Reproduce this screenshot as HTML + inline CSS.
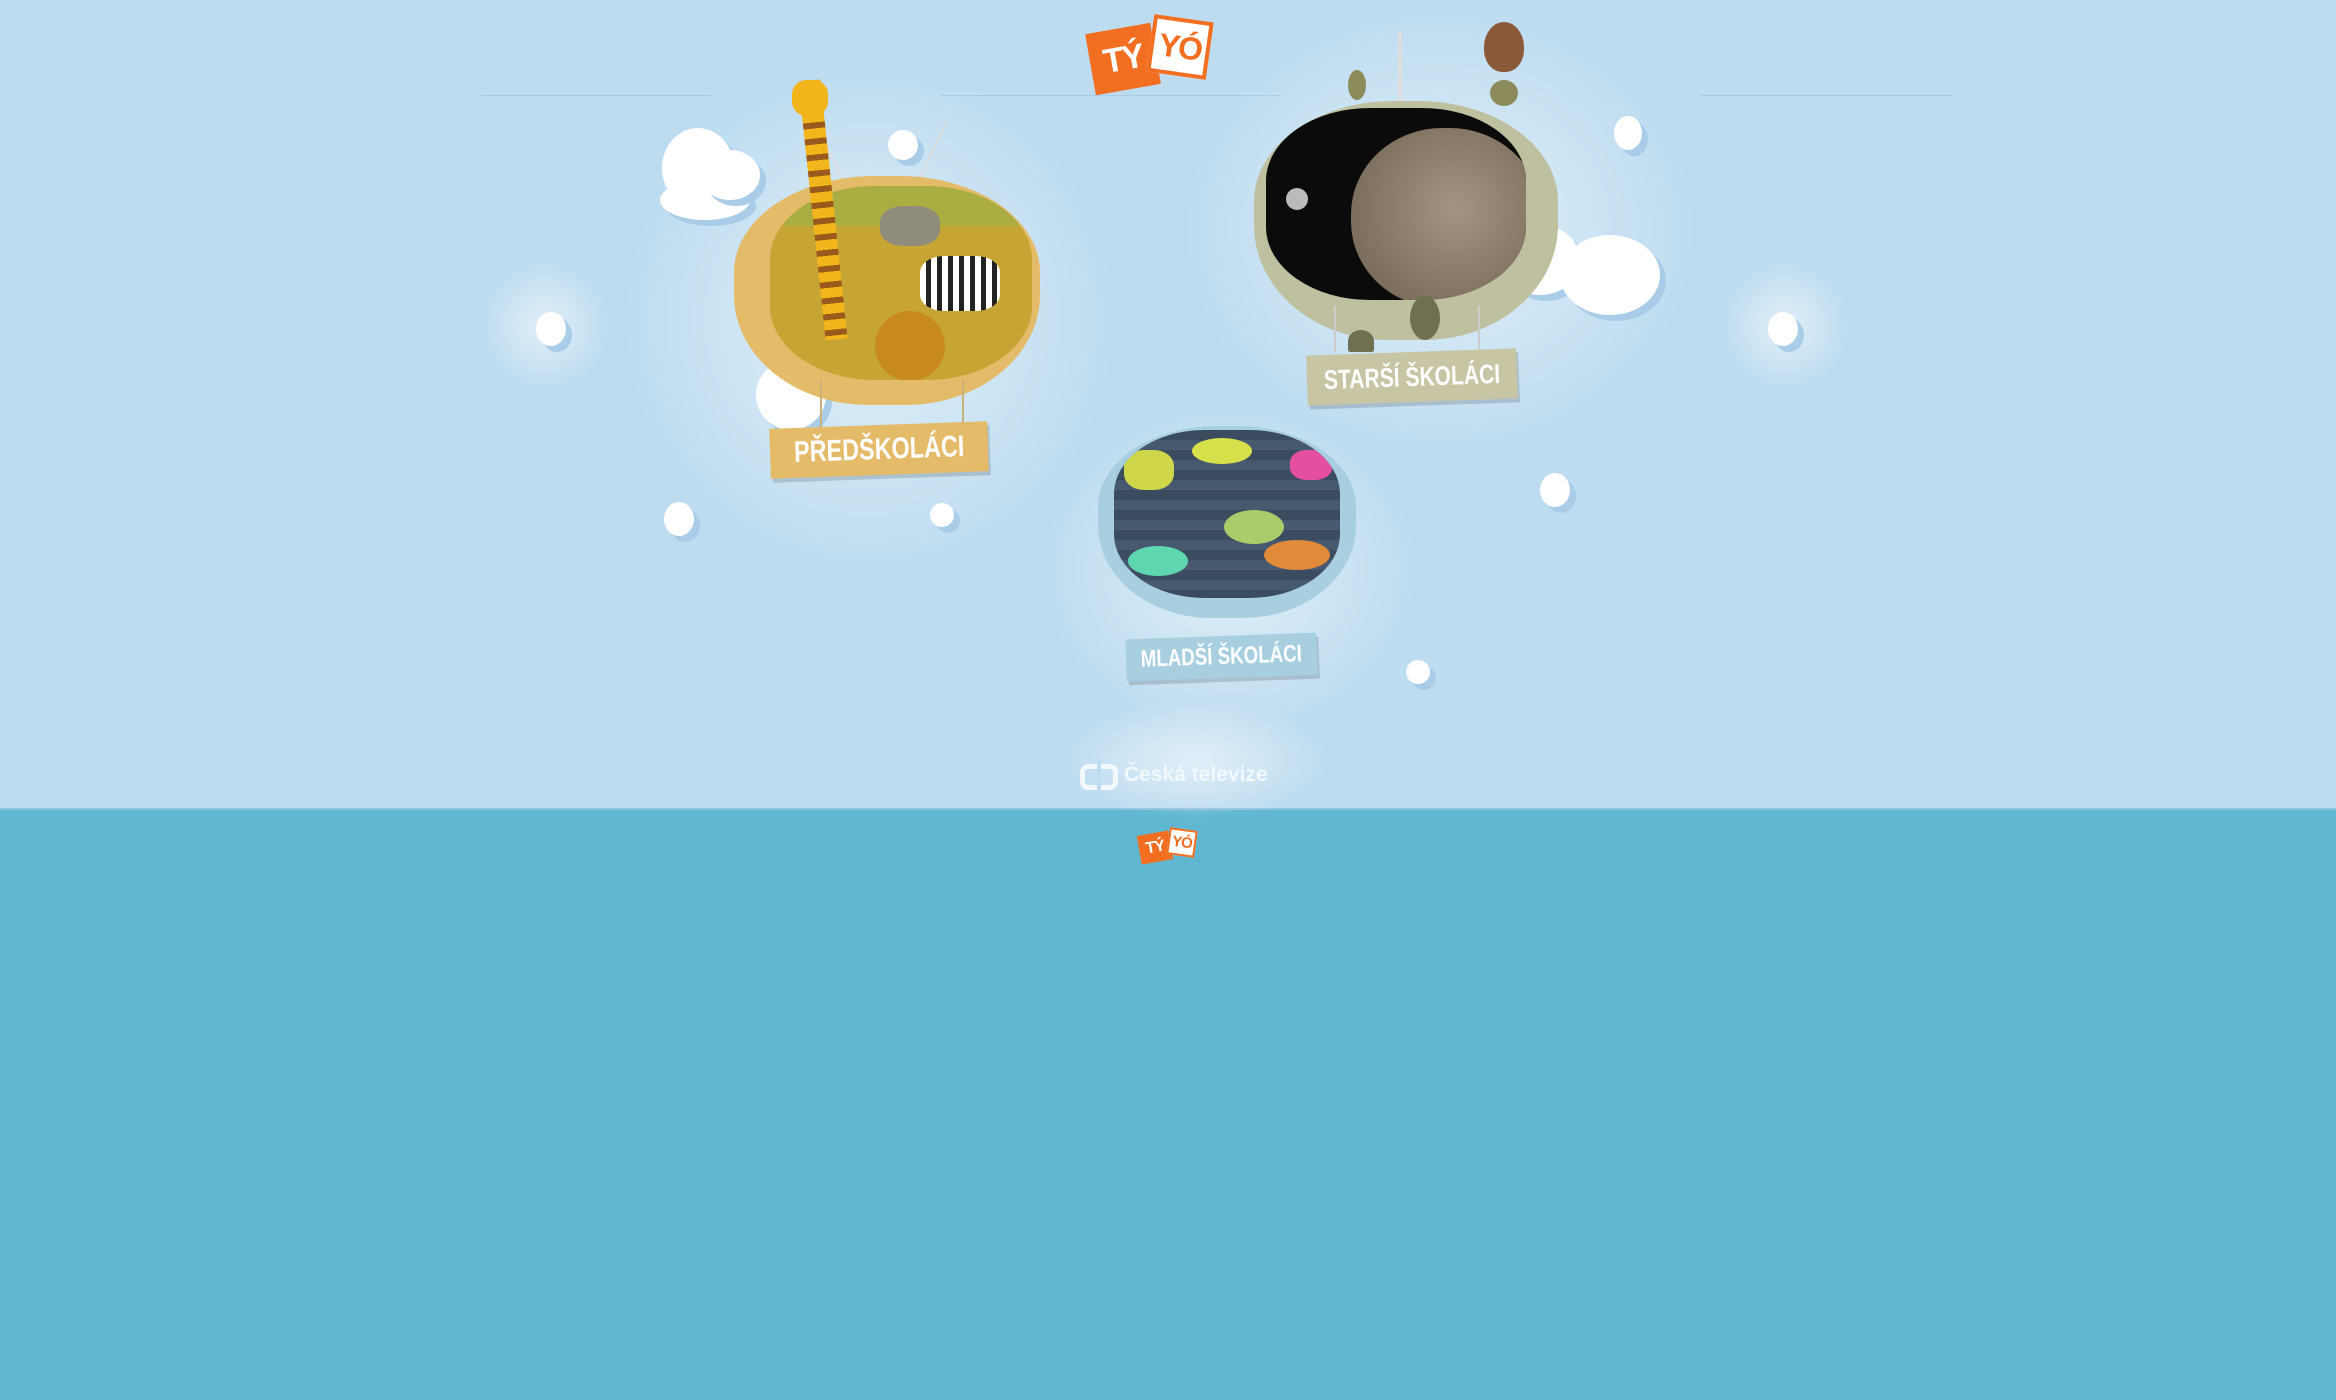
<!DOCTYPE html>
<html><head><meta charset="utf-8"><style>
html,body{margin:0;padding:0}
body{width:2336px;height:1400px;position:relative;overflow:hidden;background:#5fb7d1;font-family:"Liberation Sans",sans-serif}
#top{position:absolute;left:0;top:0;width:2336px;height:808px;background:#bddcf0;border-bottom:2px solid #8fc3dc}
.hl{position:absolute;top:95px;height:1px;background:#a8cde6}
.glow{position:absolute;border-radius:50%;background:radial-gradient(closest-side,rgba(255,255,255,.55),rgba(255,255,255,0))}
.cl{position:absolute;background:#fff;border-radius:50%;box-shadow:6px 6px 0 #a9cde8}
.logo{position:absolute}
.logo .a{position:absolute;background:#f26f21;color:#fff;font-weight:bold;transform:rotate(-10deg);display:flex;align-items:center;justify-content:center;letter-spacing:-2px;overflow:hidden}
.logo .b{position:absolute;background:#fff;border:solid #f26f21;color:#f26f21;font-weight:bold;transform:rotate(8deg);display:flex;align-items:center;justify-content:center;letter-spacing:-2px;overflow:hidden;box-sizing:border-box}
.tv{position:absolute;border-radius:46% 46% 44% 44%/42% 42% 48% 48%}
.scr{position:absolute;border-radius:40%/38%;overflow:hidden}
.lab{position:absolute;color:#fff;font-weight:bold;display:flex;justify-content:center;align-items:center;transform:rotate(-2deg);white-space:nowrap;overflow:hidden;box-shadow:2px 4px 0 rgba(0,0,0,.15)}
.lab span{display:inline-block;flex:none;transform:scaleX(.78)}
.str{position:absolute;width:2px;background:#c9b27a}
</style></head><body>
<div id="top">
<div class="hl" style="left:481px;width:230px"></div>
<div class="hl" style="left:940px;width:340px"></div>
<div class="hl" style="left:1700px;width:253px"></div>
<div class="glow" style="left:620px;top:60px;width:500px;height:520px"></div>
<div class="glow" style="left:1180px;top:0;width:520px;height:460px"></div>
<div class="glow" style="left:1040px;top:400px;width:380px;height:340px"></div>
<div class="glow" style="left:480px;top:260px;width:130px;height:130px"></div>
<div class="glow" style="left:1720px;top:260px;width:130px;height:130px"></div>
<div class="glow" style="left:1060px;top:700px;width:270px;height:120px"></div>

<div class="cl" style="left:662px;top:128px;width:72px;height:80px"></div>
<div class="cl" style="left:660px;top:180px;width:90px;height:40px"></div>
<div class="cl" style="left:700px;top:150px;width:60px;height:50px"></div>
<div class="cl" style="left:756px;top:360px;width:70px;height:70px"></div>
<div class="cl" style="left:888px;top:130px;width:30px;height:30px"></div>
<div class="cl" style="left:536px;top:312px;width:30px;height:34px"></div>
<div class="cl" style="left:664px;top:502px;width:30px;height:34px"></div>
<div class="cl" style="left:930px;top:503px;width:24px;height:24px"></div>
<div class="cl" style="left:1500px;top:225px;width:80px;height:70px"></div>
<div class="cl" style="left:1560px;top:235px;width:100px;height:80px"></div>
<div class="cl" style="left:1614px;top:116px;width:28px;height:34px"></div>
<div class="cl" style="left:1768px;top:312px;width:30px;height:34px"></div>
<div class="cl" style="left:1540px;top:473px;width:30px;height:34px"></div>
<div class="cl" style="left:1406px;top:660px;width:24px;height:24px"></div>

<div class="logo" style="left:1086px;top:12px;width:140px;height:80px">
 <div class="a" style="left:4px;top:16px;width:66px;height:62px;font-size:34px">TÝ</div>
 <div class="b" style="left:64px;top:6px;width:60px;height:58px;border-width:4px;font-size:32px">YÓ</div>
</div>

<div class="str" style="left:830px;top:120px;height:70px;transform:rotate(-25deg);background:#ddd"></div>
<div class="str" style="left:930px;top:120px;height:70px;transform:rotate(25deg);background:#ddd"></div>
<div class="tv" style="left:734px;top:176px;width:306px;height:229px;background:#e4bb68"></div>
<div class="scr" style="left:770px;top:186px;width:262px;height:194px;background:#c7a534">
 <div style="position:absolute;left:0;top:0;width:100%;height:40px;background:#a9ad42"></div>
 <div style="position:absolute;left:110px;top:20px;width:60px;height:40px;background:#8f8c7c;border-radius:40%"></div>
 <div style="position:absolute;left:150px;top:70px;width:80px;height:55px;background:repeating-linear-gradient(90deg,#fff 0 6px,#222 6px 11px);border-radius:30%"></div>
 <div style="position:absolute;left:105px;top:125px;width:70px;height:70px;background:#c88a1e;border-radius:50%"></div>
</div>
<div style="position:absolute;left:812px;top:80px;width:22px;height:260px;background:repeating-linear-gradient(#f2b51c 0 10px,#9a5a1c 10px 16px);transform:rotate(-6deg)"></div>
<div style="position:absolute;left:792px;top:80px;width:36px;height:36px;background:#f2b51c;border-radius:40%"></div>
<div class="str" style="left:820px;top:380px;height:50px"></div>
<div class="str" style="left:962px;top:380px;height:45px"></div>
<div class="lab" style="left:770px;top:425px;width:218px;height:50px;background:#e4bb68;font-size:30px"><span>PŘEDŠKOLÁCI</span></div>

<div class="str" style="left:1398px;top:30px;height:80px;background:#ddd;width:4px"></div>
<div style="position:absolute;left:1484px;top:22px;width:40px;height:50px;background:#8a5a3a;border-radius:50% 50% 45% 45%"></div>
<div style="position:absolute;left:1490px;top:80px;width:28px;height:26px;background:#8c8c5a;border-radius:50%"></div>
<div style="position:absolute;left:1348px;top:70px;width:18px;height:30px;background:#8c8c5a;border-radius:50%"></div>
<div class="tv" style="left:1254px;top:101px;width:304px;height:239px;background:#bfc0a0"></div>
<div class="scr" style="left:1266px;top:108px;width:260px;height:192px;background:#0b0b0c">
 <div style="position:absolute;left:85px;top:20px;width:190px;height:180px;background:radial-gradient(circle at 55% 45%,#a39582,#6e604e);border-radius:48%"></div>
 <div style="position:absolute;left:20px;top:80px;width:22px;height:22px;background:#bbb;border-radius:50%"></div>
</div>
<div style="position:absolute;left:1410px;top:296px;width:30px;height:44px;background:#6f7050;border-radius:50%"></div>
<div style="position:absolute;left:1348px;top:330px;width:26px;height:22px;background:#6f7050;border-radius:50% 50% 10% 10%"></div>
<div class="str" style="left:1334px;top:306px;height:46px;background:#ccc"></div>
<div class="str" style="left:1478px;top:306px;height:46px;background:#ccc"></div>
<div class="lab" style="left:1307px;top:352px;width:210px;height:50px;background:#c7c5a3;font-size:27px"><span>STARŠÍ ŠKOLÁCI</span></div>

<div class="tv" style="left:1098px;top:426px;width:258px;height:192px;background:#a7cfe0"></div>
<div class="scr" style="left:1114px;top:430px;width:226px;height:168px;background:repeating-linear-gradient(#3c4c60 0 10px,#47596e 10px 20px)">
 <div style="position:absolute;left:10px;top:20px;width:50px;height:40px;background:#cfd64a;border-radius:40%"></div>
 <div style="position:absolute;left:78px;top:8px;width:60px;height:26px;background:#d6e04a;border-radius:50%"></div>
 <div style="position:absolute;left:176px;top:20px;width:42px;height:30px;background:#e44fa0;border-radius:40%"></div>
 <div style="position:absolute;left:110px;top:80px;width:60px;height:34px;background:#aacd6b;border-radius:50%"></div>
 <div style="position:absolute;left:14px;top:116px;width:60px;height:30px;background:#5ed6b0;border-radius:50%"></div>
 <div style="position:absolute;left:150px;top:110px;width:66px;height:30px;background:#e08a3a;border-radius:50%"></div>
</div>
<div class="lab" style="left:1126px;top:636px;width:191px;height:42px;background:#a7cfe0;font-size:24px"><span>MLADŠÍ ŠKOLÁCI</span></div>

<div style="position:absolute;left:1080px;top:764px;width:38px;height:26px;border:5px solid #f2f8fc;border-radius:8px;box-sizing:border-box"></div>
<div style="position:absolute;left:1097px;top:760px;width:4px;height:34px;background:#bddcf0"></div>
<div style="position:absolute;left:1124px;top:763px;color:#f2f8fc;font-weight:bold;font-size:21px">Česká televize</div>
</div>

<div class="logo" style="left:1138px;top:826px;width:66px;height:40px">
 <div class="a" style="left:1px;top:7px;width:32px;height:29px;font-size:16px;letter-spacing:-1px">TÝ</div>
 <div class="b" style="left:30px;top:3px;width:28px;height:27px;border-width:2px;font-size:15px;letter-spacing:-1px">YÓ</div>
</div>
</body></html>
